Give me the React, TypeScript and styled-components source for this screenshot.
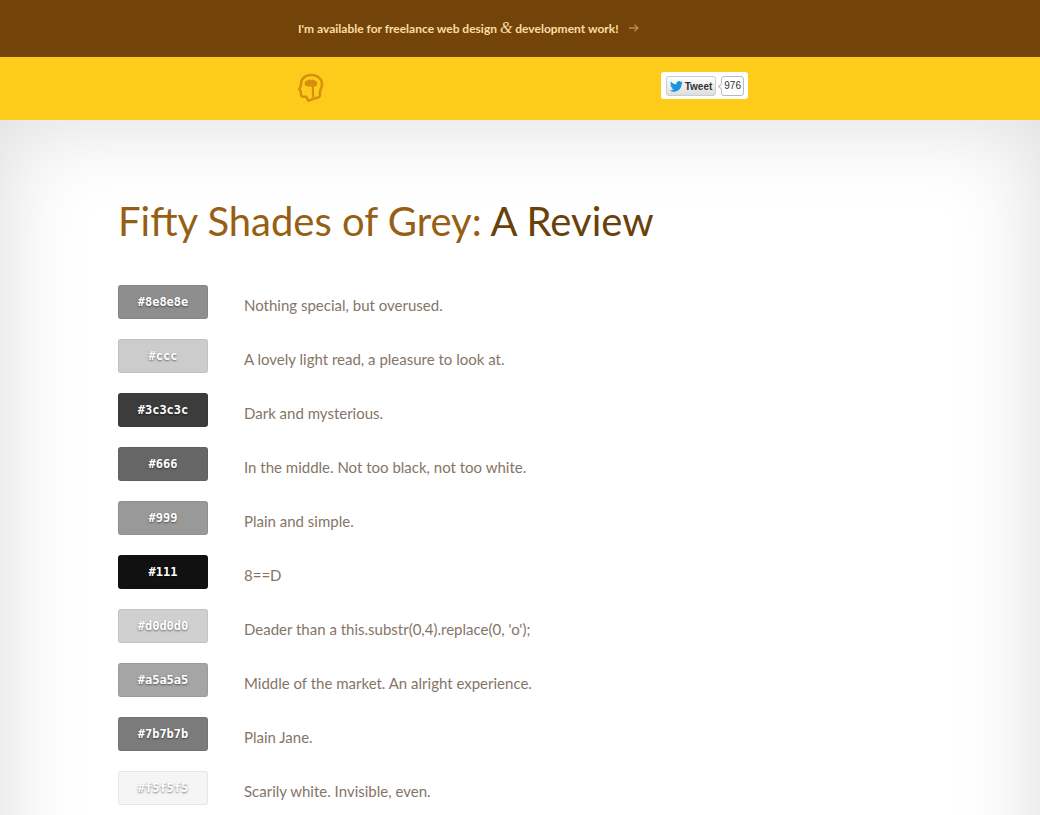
import React from "react";
import styled, { createGlobalStyle } from "styled-components";

const GlobalStyle = createGlobalStyle`
  body {
    margin: 0;
    background: #fff;
    font-family: "Gill Sans", "Gill Sans MT", Lato, sans-serif;
    color: #857567;
  }
`;

const Page = styled.div`
  display: flex;
  flex-direction: column;
  min-height: 100vh;
`;

const Narrow = styled.div`
  box-sizing: border-box;
  width: 100%;
  max-width: 444px;
  margin: 0 auto;
`;

const Banner = styled.div`
  background: #73440a;
  border-bottom: 1px solid #804012;
`;

const BannerLink = styled.a`
  display: flex;
  align-items: center;
  gap: 10px;
  height: 56px;
  font-size: 12px;
  font-weight: 700;
  line-height: 16px;
  white-space: nowrap;
  color: #fcdca4;
  text-decoration: none;
`;

const Ampersand = styled.em`
  font-family: Baskerville, "Liberation Serif", serif;
  font-size: 16px;
  font-weight: 400;
  line-height: 1;
`;

const TopBar = styled.header`
  background: #fdcc1b;
`;

const TopBarInner = styled(Narrow)`
  display: flex;
  justify-content: space-between;
  align-items: flex-start;
  height: 63px;
  padding-top: 15px;
`;

const HomeLink = styled.a`
  display: block;
  height: 32px;
`;

const TweetBox = styled.div`
  display: flex;
  align-items: center;
  gap: 5px;
  margin-right: -6px;
  padding: 4px 4px 3px 5px;
  border-radius: 3px;
  background: #fff;
  font-family: "Liberation Sans", Arial, sans-serif;
  font-size: 10px;
`;

const TweetButton = styled.button`
  display: flex;
  align-items: center;
  gap: 2px;
  height: 20px;
  padding: 0 3px;
  border: 1px solid #ccc;
  border-radius: 3px;
  background: linear-gradient(#fff, #dedede);
  font: inherit;
  font-weight: 700;
  color: #333;
`;

const TweetCount = styled.a`
  position: relative;
  box-sizing: border-box;
  height: 20px;
  padding: 0 2px;
  border: 1px solid #bbb;
  border-radius: 3px;
  background: #fff;
  line-height: 18px;
  color: #333;
  text-decoration: none;

  &::before {
    content: "";
    position: absolute;
    top: 7px;
    left: -3px;
    width: 4px;
    height: 4px;
    border: solid #bbb;
    border-width: 0 0 1px 1px;
    background: #fff;
    transform: rotate(45deg);
  }
`;

const Main = styled.main`
  position: relative;
  z-index: 0;
  flex: 1;
  overflow: hidden;
  padding: 75px 24px 9px;

  /* vignette along the top and sides, running on past the bottom edge */
  &::before {
    content: "";
    position: absolute;
    inset: 0 0 -140px;
    z-index: -1;
    box-shadow: inset 0 0 90px rgba(0, 0, 0, 0.14);
  }
`;

const Content = styled.div`
  max-width: 804px;
  margin: 0 auto;
`;

const Title = styled.h1`
  margin: 0 0 38px;
  font-size: 40px;
  font-weight: 400;
  line-height: 52px;
  color: #69410a;
`;

const TitleLink = styled.a`
  color: #965f14;
  text-decoration: none;
`;

const Reviews = styled.dl`
  display: flex;
  flex-direction: column;
  gap: 20px;
  margin: 0;
`;

const Review = styled.div`
  display: grid;
  grid-template-columns: 90px 1fr;
  column-gap: 36px;
`;

const Swatch = styled.dt<{ $shade: string }>`
  box-sizing: border-box;
  height: 34px;
  border: 1px solid rgba(0, 0, 0, 0.06);
  border-radius: 3px;
  background: ${(p) => p.$shade};
  font-family: Consolas, "DejaVu Sans Mono", monospace;
  font-size: 12px;
  font-weight: 700;
  line-height: 32px;
  text-align: center;
  color: #fff;
  text-shadow: 0 1px 2px rgba(0, 0, 0, 0.5);
`;

const Verdict = styled.dd`
  margin: 0;
  padding-top: 8px;
  font-size: 15px;
  line-height: 24px;
`;

const reviews = [
  { shade: "#8e8e8e", verdict: "Nothing special, but overused." },
  { shade: "#ccc", verdict: "A lovely light read, a pleasure to look at." },
  { shade: "#3c3c3c", verdict: "Dark and mysterious." },
  { shade: "#666", verdict: "In the middle. Not too black, not too white." },
  { shade: "#999", verdict: "Plain and simple." },
  { shade: "#111", verdict: "8==D" },
  { shade: "#d0d0d0", verdict: "Deader than a this.substr(0,4).replace(0, 'o');" },
  { shade: "#a5a5a5", verdict: "Middle of the market. An alright experience." },
  { shade: "#7b7b7b", verdict: "Plain Jane." },
  { shade: "#f5f5f5", verdict: "Scarily white. Invisible, even." },
];

const Arrow = () => (
  <svg width="10" height="8" viewBox="0 0 10 8" fill="none" stroke="#b98a55" strokeWidth="1.4" aria-hidden="true">
    <path d="M0 4h9M5.5 0.8 9 4 5.5 7.2" />
  </svg>
);

const HeadLogo = () => (
  <svg width="26" height="32" viewBox="0 0 26 32" fill="none" aria-hidden="true">
    <path
      d="M13.2 3C7 3 3 6.800 3 12c0 2-.6 3-1.400 4.600-.5 1 0 1.700 1.100 2 .1 1.800-.1 3.600.5 5 .8 1.500 2.800 1.200 5 1.200.8 1.200 1 2.600 2.200 4l6.400-2.600c2.400-.3 4.400-.5 4.900-2 .6-2.600-.1-4.700.9-6.700.9-1.800 1.400-3.300 1.400-5.300C24 6.800 19.600 3 13.200 3Z"
      stroke="#d6900c"
      strokeWidth="2.500"
      strokeLinejoin="round"
    />
    <path
      d="M9.800 8.200c.9-.9 2.400-.9 3.300-.2 1-.7 2.600-.5 3.300.4 1.600-.1 2.900.9 2.700 2.500.5 1.700-.5 3.500-2.100 3.500-.4.300-.8.400-1.200.4l.5 10.400h-2.400l-.1-10.400c-.7.200-1.300 0-1.800-.5-1 .8-2.500.7-3.200-.2-1.500.1-2.500-1.300-2.200-2.600-.2-1.700 1.300-3.300 3.200-3.300Z"
      fill="#d6900c"
    />
  </svg>
);

const Bird = () => (
  <svg width="13" height="11" viewBox="0 0 24 20" fill="#1b95e0" aria-hidden="true">
    <path d="M24 2.400a9.800 9.800 0 0 1-2.800.8A4.900 4.900 0 0 0 23.300.4a9.900 9.900 0 0 1-3.100 1.200 4.900 4.900 0 0 0-8.400 4.500A14 14 0 0 1 1.700 1a4.900 4.900 0 0 0 1.500 6.500A4.900 4.900 0 0 1 1 6.900v.1a4.900 4.900 0 0 0 3.900 4.800 4.900 4.900 0 0 1-2.200.1 4.900 4.900 0 0 0 4.600 3.400A9.900 9.900 0 0 1 0 17.300a13.900 13.900 0 0 0 7.500 2.200c9.100 0 14.300-7.700 14-14.600A10 10 0 0 0 24 2.400Z" />
  </svg>
);

export default function App() {
  return (
    <Page>
      <GlobalStyle />
      <Banner>
        <Narrow>
          <BannerLink href="#hire">
            <span>
              I'm available for freelance web design <Ampersand>&amp;</Ampersand> development work!
            </span>
            <Arrow />
          </BannerLink>
        </Narrow>
      </Banner>
      <TopBar>
        <TopBarInner>
          <HomeLink href="#home" aria-label="Home">
            <HeadLogo />
          </HomeLink>
          <TweetBox>
            <TweetButton type="button">
              <Bird />
              Tweet
            </TweetButton>
            <TweetCount href="#tweets">976</TweetCount>
          </TweetBox>
        </TopBarInner>
      </TopBar>
      <Main>
        <Content>
          <Title>
            <TitleLink href="#book">Fifty Shades of Grey:</TitleLink> A Review
          </Title>
          <Reviews>
            {reviews.map(({ shade, verdict }) => (
              <Review key={shade}>
                <Swatch $shade={shade}>{shade}</Swatch>
                <Verdict>{verdict}</Verdict>
              </Review>
            ))}
          </Reviews>
        </Content>
      </Main>
    </Page>
  );
}
